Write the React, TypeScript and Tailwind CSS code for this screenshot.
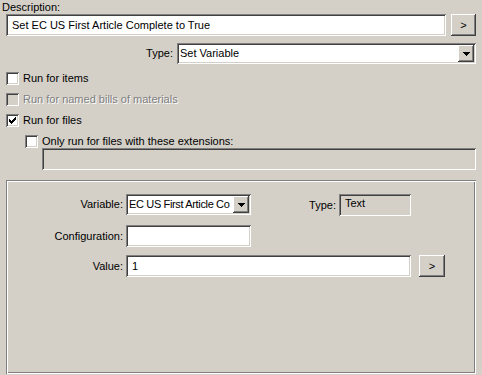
import React from "react";

const sunken =
  "shadow-[inset_1px_1px_0_#808080,inset_-1px_-1px_0_#ffffff,inset_2px_2px_0_#404040,inset_-2px_-2px_0_#d4d0c8]";
const raised =
  "shadow-[inset_-1px_-1px_0_#404040,inset_1px_1px_0_#ffffff,inset_-2px_-2px_0_#808080,inset_2px_2px_0_#d4d0c8]";
const etched =
  "shadow-[inset_1px_1px_0_#808080,inset_-1px_-1px_0_#ffffff,inset_2px_2px_0_#ffffff,inset_-2px_-2px_0_#808080]";

function Checkbox({ checked, disabled }: { checked?: boolean; disabled?: boolean }) {
  return (
    <div
      className={`relative w-[13px] h-[13px] shrink-0 ${sunken} ${
        disabled ? "bg-[#d4d0c8]" : "bg-white"
      }`}
    >
      {checked && (
        <svg
          className="absolute left-[3px] top-[3px]"
          width="7"
          height="7"
          viewBox="0 0 7 7"
          shapeRendering="crispEdges"
        >
          <path d="M0 2h1v1h1v1h1v-1h1v-1h1v-1h1v-1h1v3h-1v1h-1v1h-1v1h-1v1h-1v-1h-1v-1h-1z" fill="#000" />
        </svg>
      )}
    </div>
  );
}

function CheckRow({
  label,
  checked,
  disabled,
  className = "",
}: {
  label: string;
  checked?: boolean;
  disabled?: boolean;
  className?: string;
}) {
  return (
    <div className={`flex items-center h-[13px] gap-[4px] ${className}`}>
      <Checkbox checked={checked} disabled={disabled} />
      <span
        className={
          disabled ? "text-[#808080] [text-shadow:1px_1px_0_#ffffff]" : "text-black"
        }
      >
        {label}
      </span>
    </div>
  );
}

function Combo({
  value,
  className = "",
  textClass = "",
}: {
  value: string;
  className?: string;
  textClass?: string;
}) {
  return (
    <div className={`flex items-center bg-white p-[2px] ${sunken} ${className}`}>
      <div className={`flex-1 min-w-0 overflow-hidden whitespace-nowrap pl-[1px] ${textClass}`}>{value}</div>
      <div className={`w-[16px] h-full shrink-0 bg-[#d4d0c8] flex items-center justify-center ${raised}`}>
        <svg width="7" height="4" viewBox="0 0 7 4" shapeRendering="crispEdges">
          <path d="M0 0h7v1h-1v1h-1v1h-1v1h-1v-1h-1v-1h-1v-1h-1z" fill="#000" />
        </svg>
      </div>
    </div>
  );
}

function Edit({ value, className = "" }: { value?: string; className?: string }) {
  return (
    <div className={`flex items-center bg-white pl-[6px] h-[22px] whitespace-nowrap overflow-hidden ${sunken} ${className}`}>
      {value}
    </div>
  );
}

function MoreButton({ className = "" }: { className?: string }) {
  return (
    <div className={`flex items-center justify-center h-[22px] bg-[#d4d0c8] ${raised} ${className}`}>
      &gt;
    </div>
  );
}

export default function App() {
  return (
    <div className="w-[482px] h-[375px] overflow-hidden bg-[#d4d0c8] text-black text-[11px] leading-[13px] font-['Liberation_Sans',Arial,sans-serif] flex flex-col pl-[6px]">
      <div className="mt-[1px] h-[13px] -ml-[4px]">Description:</div>

      <div className="flex gap-[5px]">
        <Edit value="Set EC US First Article Complete to True" className="w-[440px]" />
        <MoreButton className="w-[25px]" />
      </div>

      <div className="flex items-center mt-[7px] h-[21px]">
        <div className="w-[171px] text-right pr-[4px]">Type:</div>
        <Combo value="Set Variable" className="w-[299px] h-[21px]" />
      </div>

      <CheckRow label="Run for items" className="mt-[8px]" />
      <CheckRow label="Run for named bills of materials" disabled className="mt-[8px]" />
      <CheckRow label="Run for files" checked className="mt-[8px]" />
      <CheckRow label="Only run for files with these extensions:" className="mt-[8px] ml-[19px]" />
      <div className={`ml-[36px] w-[434px] h-[22px] bg-[#d4d0c8] ${sunken}`} />

      <div className={`mt-[10px] w-[470px] h-[194px] pt-[14px] ${etched}`}>
        <div className="flex items-start h-[22px]">
          <div className="w-[117px] h-[21px] flex items-center justify-end">Variable:</div>
          <Combo
            value="EC US First Article Co"
            textClass="tracking-[-0.35px]"
            className="ml-[3px] w-[125px] h-[21px]"
          />
          <div className="w-[85px] h-[22px] flex items-center justify-end">Type:</div>
          <div className={`ml-[3px] w-[72px] h-[22px] pl-[6px] pt-[3px] ${sunken}`}>Text</div>
        </div>

        <div className="flex items-center mt-[9px]">
          <div className="w-[117px] text-right">Configuration:</div>
          <Edit className="ml-[3px] w-[125px]" />
        </div>

        <div className="flex items-center mt-[8px]">
          <div className="w-[117px] text-right">Value:</div>
          <Edit value="1" className="ml-[3px] w-[285px]" />
          <MoreButton className="ml-[8px] w-[26px]" />
        </div>
      </div>
    </div>
  );
}
